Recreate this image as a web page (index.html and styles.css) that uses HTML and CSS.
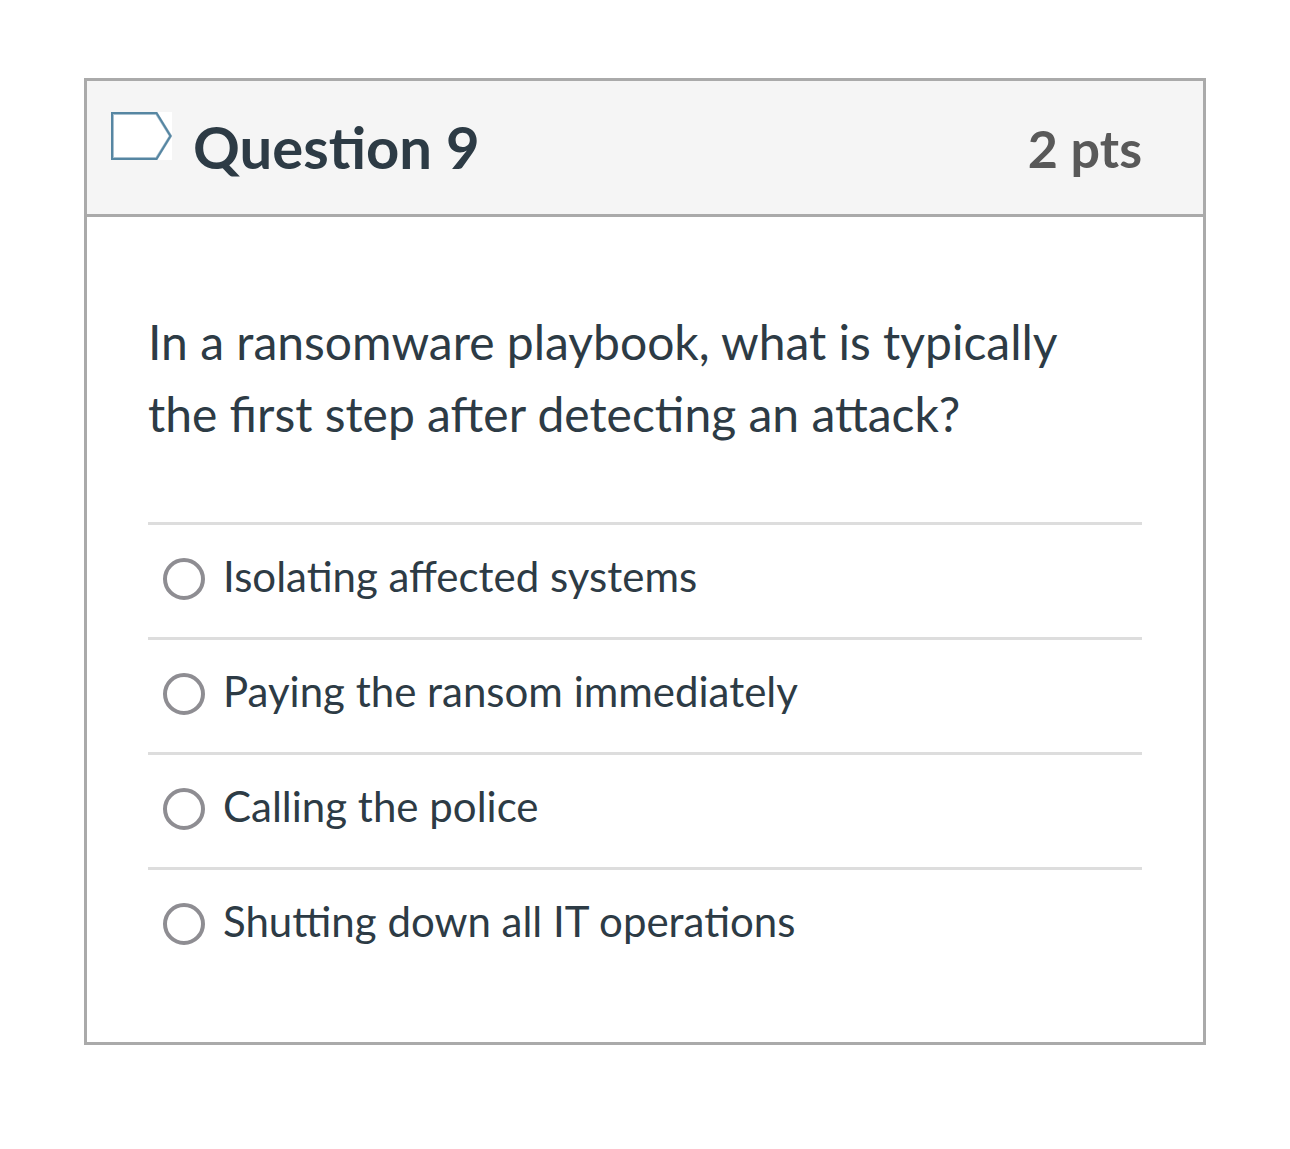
FILE: index.html
```html
<!DOCTYPE html>
<html lang="en">
<head>
    <meta charset="UTF-8">
    <meta name="viewport" content="width=device-width, initial-scale=1.0">
    <title>Question 9</title>
    <link rel="stylesheet" href="styles.css">
</head>
<body>

    <form class="question">
        <header class="question-header">
            <button type="button" class="flag-button" aria-label="Flag question">
                <svg width="61" height="48" viewBox="0 0 61 48">
                    <rect width="61" height="48" fill="#fff"/>
                    <path d="M1.5 1.5H45.5L59.5 24L45.5 46.5H1.5Z" fill="#fff" stroke="#a9c1d0" stroke-width="3"/>
                    <path d="M1 1H45.500L59.500 24L45.500 47H1Z" fill="none" stroke="#5686a2" stroke-width="2"/>
                </svg>
            </button>
            <h1>Question 9</h1>
            <span class="points">2 pts</span>
        </header>

        <fieldset class="question-body">
            <legend>In a ransomware playbook, what is typically the first step after detecting an attack?</legend>

            <label class="answer">
                <input type="radio" name="answer" value="1">
                <span>Isolating affected systems</span>
            </label>
            <label class="answer">
                <input type="radio" name="answer" value="2">
                <span>Paying the ransom immediately</span>
            </label>
            <label class="answer">
                <input type="radio" name="answer" value="3">
                <span>Calling the police</span>
            </label>
            <label class="answer">
                <input type="radio" name="answer" value="4">
                <span>Shutting down all IT operations</span>
            </label>
        </fieldset>
    </form>

</body>
</html>
```
FILE: styles.css
```css
body {
    font-family: Lato, sans-serif;
    margin: 0;
    padding: 78px 84px;
    background-color: #fff;
    color: #2d3b45;
}

.question {
    border: 3px solid #aaa;
}

.question-header {
    display: flex;
    align-items: center;
    box-sizing: border-box;
    height: 136px;
    padding: 0 61px 0 24px;
    background-color: #f5f5f5;
    border-bottom: 3px solid #aaa;
}

.flag-button {
    align-self: flex-start;
    margin: 31px 21px 0 0;
    padding: 0;
    border: none;
    background: none;
    cursor: pointer;
}

.flag-button svg {
    display: block;
}

h1 {
    flex: 1;
    margin: 0;
    padding-bottom: 2px;
    font-size: 58px;
    font-weight: bold;
}

.points {
    color: #595959;
    font-size: 52px;
    font-weight: bold;
}

.question-body {
    margin: 0;
    padding: 89px 61px 60px;
    border: none;
}

legend {
    float: left;
    box-sizing: border-box;
    width: 100%;
    margin-bottom: 72px;
    padding: 0 48px 0 0;
    font-size: 48px;
    line-height: 72px;
}

.answer {
    display: flex;
    clear: both;
    align-items: center;
    gap: 18px;
    box-sizing: border-box;
    height: 115px;
    padding: 0 0 4px 15px;
    border-top: 3px solid #ddd;
    font-size: 42px;
    cursor: pointer;
}

.answer input {
    appearance: none;
    width: 42px;
    height: 42px;
    margin: 0;
    border: 4px solid #8e8d92;
    border-radius: 50%;
    background-color: #fff;
}

.answer input:checked {
    border-width: 12px;
}

.answer span {
    padding-bottom: 6px;
}
```
